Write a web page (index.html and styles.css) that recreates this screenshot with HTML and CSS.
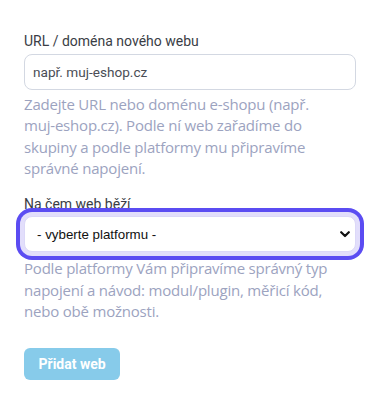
FILE: index.html
```html
<!DOCTYPE html>
<html lang="cs">
<head>
<meta charset="utf-8">
<title>Přidat web</title>
<link rel="stylesheet" href="styles.css">
</head>
<body>
<form class="form">
  <label class="label" for="url">URL / doména nového webu</label>
  <input class="input" id="url" type="text" placeholder="např. muj-eshop.cz">
  <p class="help">Zadejte URL nebo doménu e-shopu (např. muj-&#8288;eshop.cz). Podle ní web zařadíme do skupiny a podle platformy mu připravíme správné napojení.</p>

  <label class="label label-second" for="platform">Na čem web běží</label>
  <div class="select-wrap">
    <select class="select" id="platform">
      <option>- vyberte platformu -</option>
    </select>
    <svg class="chevron" width="10" height="7" viewBox="0 0 10 7" aria-hidden="true"><path d="M1.2 1.2 L5 5 L8.8 1.2" fill="none" stroke="#111" stroke-width="2.2" stroke-linecap="round" stroke-linejoin="round"/></svg>
  </div>
  <p class="help help-second">Podle platformy Vám připravíme správný typ napojení a návod: modul/plugin, měřicí kód, nebo obě možnosti.</p>

  <button class="button" type="button">Přidat web</button>
</form>
</body>
</html>
```
FILE: styles.css
```css
html, body {
  margin: 0;
  padding: 0;
  background: #ffffff;
}

.form {
  display: flex;
  flex-direction: column;
  align-items: stretch;
  padding: 31px 24px 0 24px;
}

.label {
  font-family: Roboto, "Liberation Sans", sans-serif;
  font-size: 14px;
  line-height: 20px;
  color: #3a3d45;
  margin: 0 0 3px 0;
}

.label-second {
  margin: 15px 0 2px 0;
}

.input {
  box-sizing: border-box;
  height: 36px;
  width: 100%;
  margin: 0;
  padding: 0 8px;
  border: 1px solid #d3d8e2;
  border-radius: 8px;
  font-family: Roboto, "Liberation Sans", sans-serif;
  font-size: 13.6px;
  color: #333;
  background: #fff;
  outline: none;
}

.input::placeholder {
  color: #4a4d55;
  opacity: 1;
}

.help {
  margin: 4px 0 0 0;
  font-family: "Open Sans", "Noto Sans", sans-serif;
  font-size: 15px;
  line-height: 21.33px;
  letter-spacing: -0.2px;
  color: #9ca3bf;
}

.help-second {
  margin-top: 6px;
}

.select-wrap {
  position: relative;
}

.select {
  box-sizing: border-box;
  display: block;
  width: 100%;
  height: 36px;
  margin: 0;
  padding: 0 28px 0 12px;
  border: 1px solid #dcd8f8;
  border-radius: 8px;
  background: #fff;
  font-family: "Liberation Sans", Arial, sans-serif;
  font-size: 13.33px;
  color: #111;
  -webkit-appearance: none;
  appearance: none;
  box-shadow: 0 0 0 4px #e2defb, 0 0 0 8px #5b4cf2;
  outline: none;
}

.chevron {
  position: absolute;
  right: 6px;
  top: 15px;
  pointer-events: none;
}

.button {
  align-self: flex-start;
  margin-top: 26px;
  height: 32px;
  padding: 0 14.5px;
  border: none;
  border-radius: 6px;
  background: #87cbea;
  color: #ffffff;
  font-family: Roboto, "Liberation Sans", sans-serif;
  font-weight: 700;
  font-size: 14px;
}
```
